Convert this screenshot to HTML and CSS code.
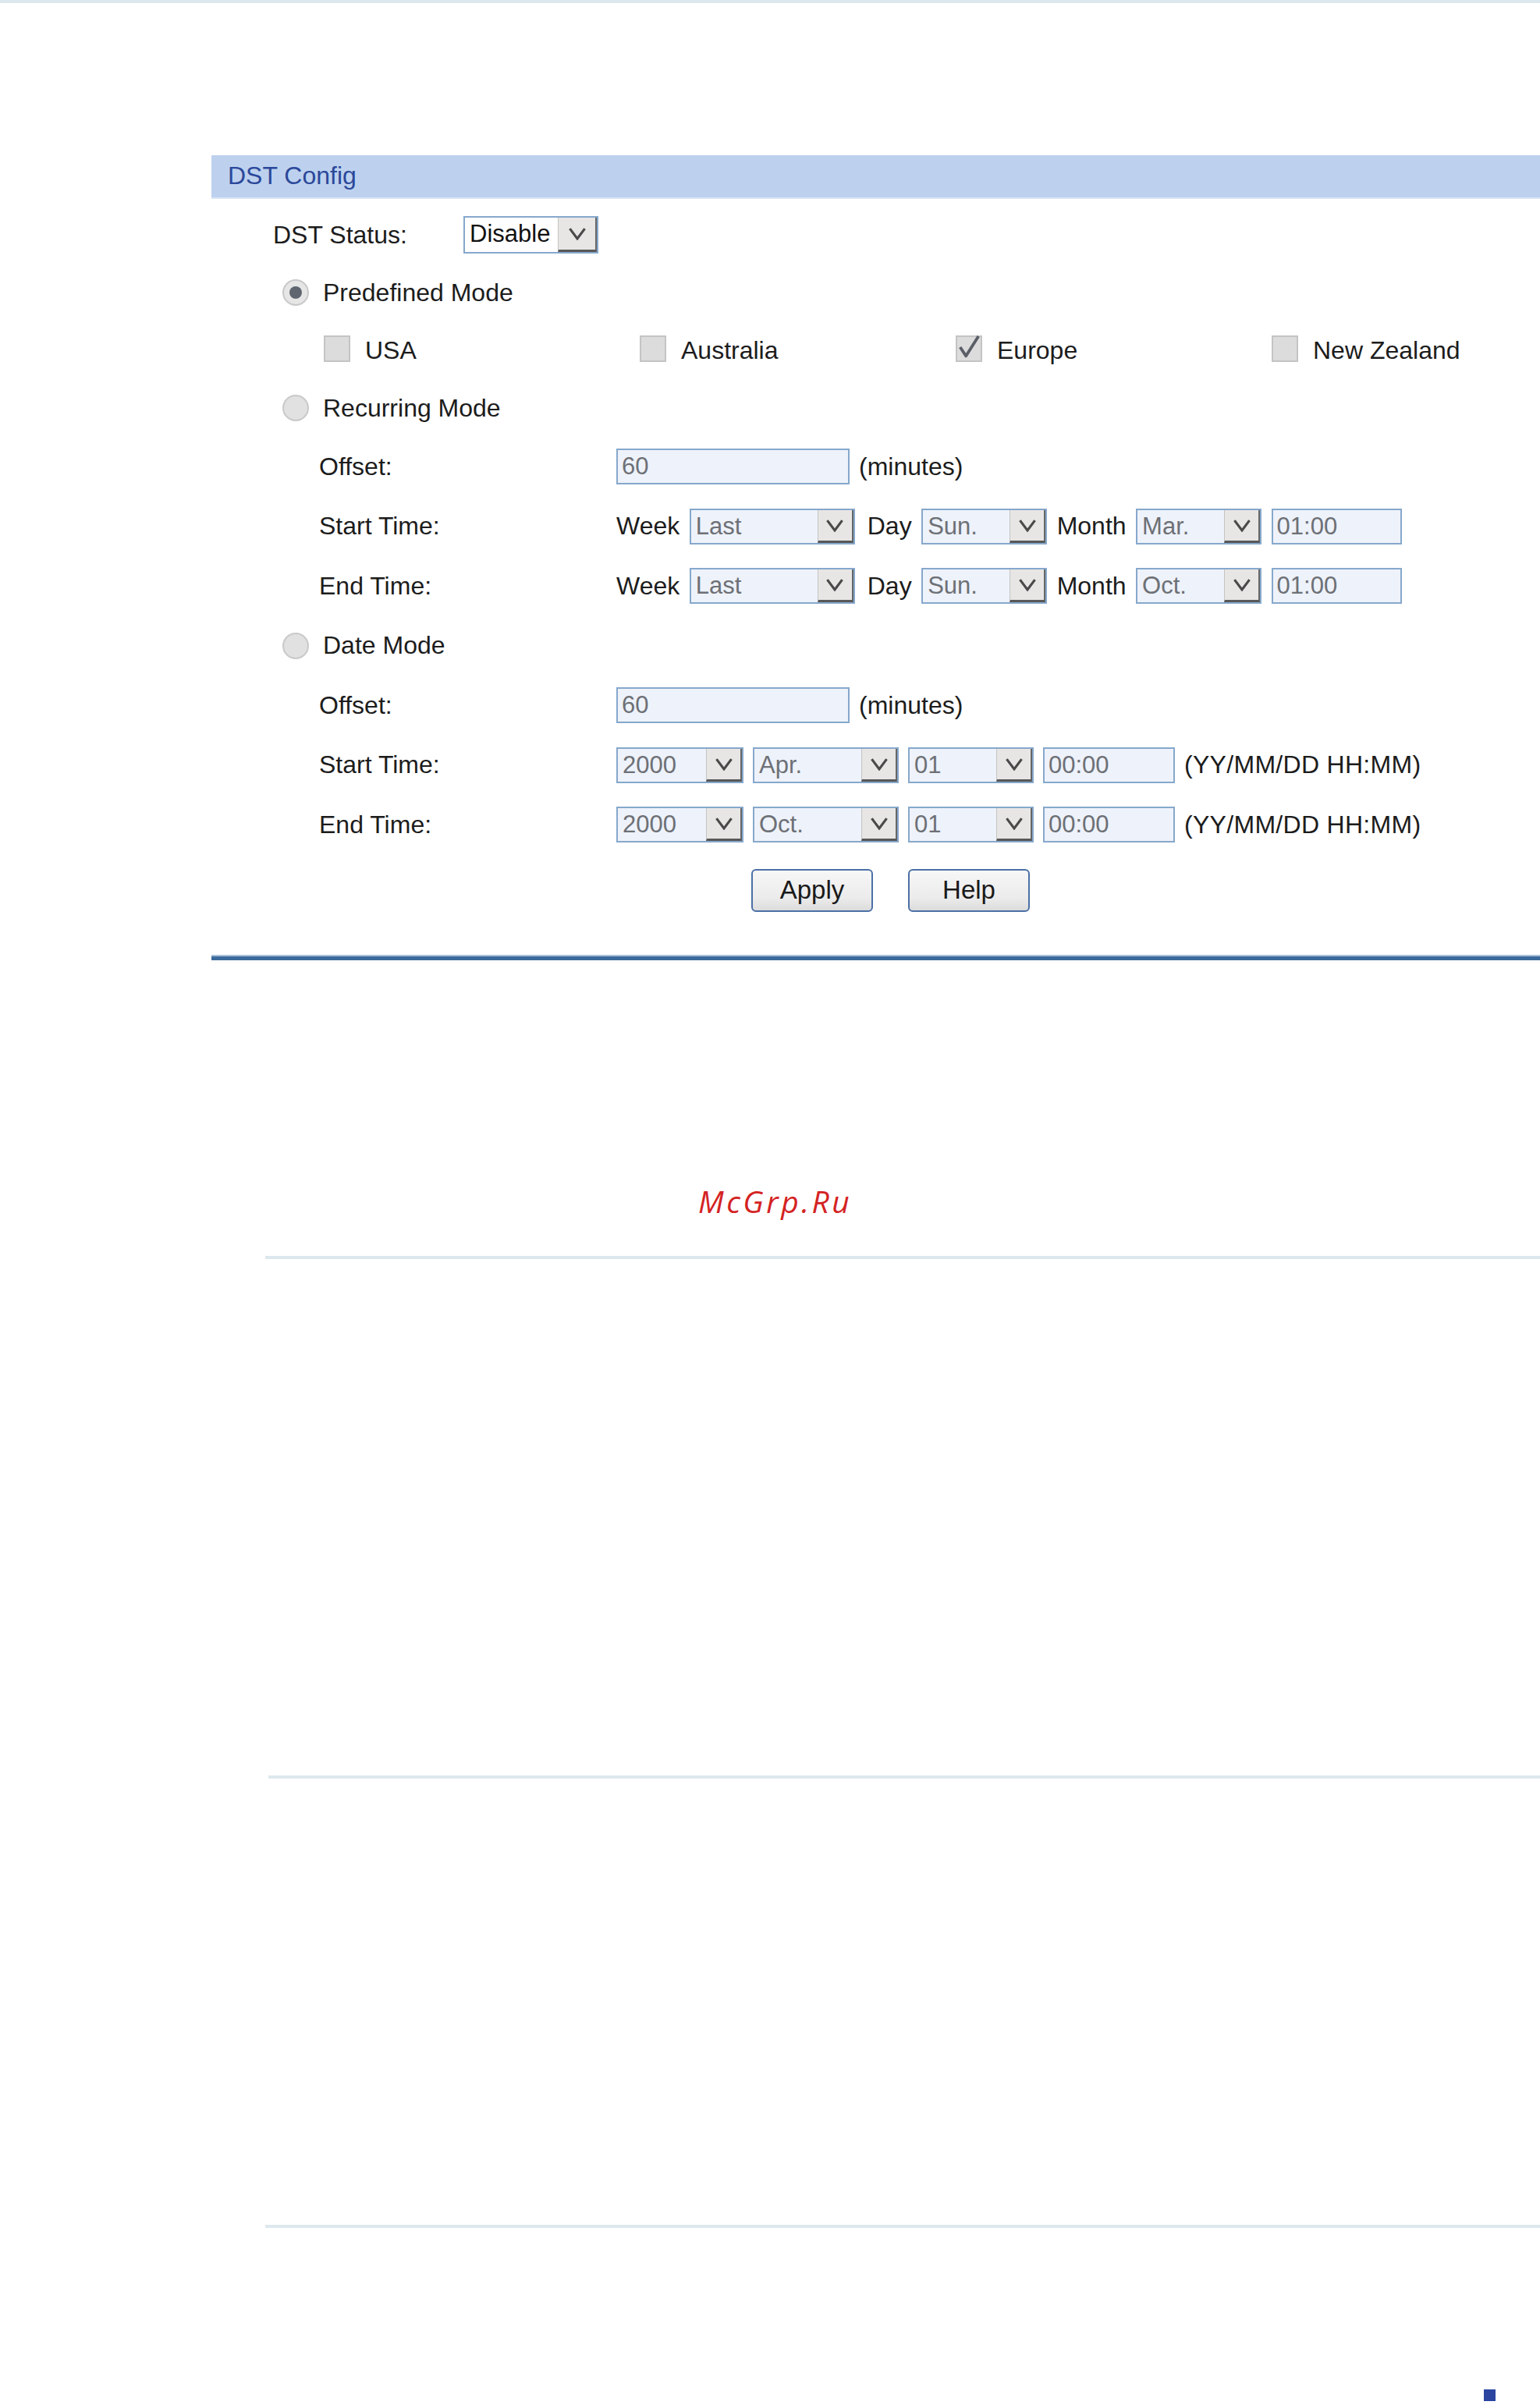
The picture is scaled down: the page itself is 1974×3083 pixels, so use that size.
FILE: index.html
```html
<!DOCTYPE html>
<html lang="en">
<head>
<meta charset="utf-8">
<title>DST Config</title>
<link rel="stylesheet" href="styles.css">
</head>
<body>
<div class="topline"></div>

<div class="panel">
  <div class="panel-head">DST Config</div>
  <div class="panel-body">
    <div class="row main">
      <span class="lbl">DST Status:</span>
      <div class="sel enabled w-status"><span class="val">Disable</span><span class="arrow"><svg viewBox="0 0 24 16" class="chev"><polyline points="3,2 12,14 21,2"/></svg></span></div>
    </div>

    <div class="row mode">
      <span class="radio checked"></span><span>Predefined Mode</span>
    </div>

    <div class="row checks">
      <div class="chk-item"><span class="chk"></span><span>USA</span></div>
      <div class="chk-item"><span class="chk"></span><span>Australia</span></div>
      <div class="chk-item"><span class="chk checked"><svg viewBox="0 0 34 34" class="tick"><polyline points="5,16 13,28 30,1"/></svg></span><span>Europe</span></div>
      <div class="chk-item"><span class="chk"></span><span>New Zealand</span></div>
    </div>

    <div class="row mode">
      <span class="radio"></span><span>Recurring Mode</span>
    </div>

    <div class="row sub">
      <span class="lbl">Offset:</span>
      <div class="ctrls">
        <div class="inp w-offset">60</div><span>(minutes)</span>
      </div>
    </div>

    <div class="row sub">
      <span class="lbl">Start Time:</span>
      <div class="ctrls rec">
        <span>Week</span>
        <div class="sel w-week"><span class="val">Last</span><span class="arrow"><svg viewBox="0 0 24 16" class="chev"><polyline points="3,2 12,14 21,2"/></svg></span></div>
        <span class="sp">Day</span>
        <div class="sel w-day"><span class="val">Sun.</span><span class="arrow"><svg viewBox="0 0 24 16" class="chev"><polyline points="3,2 12,14 21,2"/></svg></span></div>
        <span>Month</span>
        <div class="sel w-day"><span class="val">Mar.</span><span class="arrow"><svg viewBox="0 0 24 16" class="chev"><polyline points="3,2 12,14 21,2"/></svg></span></div>
        <div class="inp w-time">01:00</div>
      </div>
    </div>

    <div class="row sub">
      <span class="lbl">End Time:</span>
      <div class="ctrls rec">
        <span>Week</span>
        <div class="sel w-week"><span class="val">Last</span><span class="arrow"><svg viewBox="0 0 24 16" class="chev"><polyline points="3,2 12,14 21,2"/></svg></span></div>
        <span class="sp">Day</span>
        <div class="sel w-day"><span class="val">Sun.</span><span class="arrow"><svg viewBox="0 0 24 16" class="chev"><polyline points="3,2 12,14 21,2"/></svg></span></div>
        <span>Month</span>
        <div class="sel w-day"><span class="val">Oct.</span><span class="arrow"><svg viewBox="0 0 24 16" class="chev"><polyline points="3,2 12,14 21,2"/></svg></span></div>
        <div class="inp w-time">01:00</div>
      </div>
    </div>

    <div class="row mode">
      <span class="radio"></span><span>Date Mode</span>
    </div>

    <div class="row sub">
      <span class="lbl">Offset:</span>
      <div class="ctrls">
        <div class="inp w-offset">60</div><span>(minutes)</span>
      </div>
    </div>

    <div class="row sub">
      <span class="lbl">Start Time:</span>
      <div class="ctrls date">
        <div class="sel w-year"><span class="val">2000</span><span class="arrow"><svg viewBox="0 0 24 16" class="chev"><polyline points="3,2 12,14 21,2"/></svg></span></div>
        <div class="sel w-mon"><span class="val">Apr.</span><span class="arrow"><svg viewBox="0 0 24 16" class="chev"><polyline points="3,2 12,14 21,2"/></svg></span></div>
        <div class="sel w-dd"><span class="val">01</span><span class="arrow"><svg viewBox="0 0 24 16" class="chev"><polyline points="3,2 12,14 21,2"/></svg></span></div>
        <div class="inp w-hm">00:00</div>
        <span class="fmt">(YY/MM/DD HH:MM)</span>
      </div>
    </div>

    <div class="row sub">
      <span class="lbl">End Time:</span>
      <div class="ctrls date">
        <div class="sel w-year"><span class="val">2000</span><span class="arrow"><svg viewBox="0 0 24 16" class="chev"><polyline points="3,2 12,14 21,2"/></svg></span></div>
        <div class="sel w-mon"><span class="val">Oct.</span><span class="arrow"><svg viewBox="0 0 24 16" class="chev"><polyline points="3,2 12,14 21,2"/></svg></span></div>
        <div class="sel w-dd"><span class="val">01</span><span class="arrow"><svg viewBox="0 0 24 16" class="chev"><polyline points="3,2 12,14 21,2"/></svg></span></div>
        <div class="inp w-hm">00:00</div>
        <span class="fmt">(YY/MM/DD HH:MM)</span>
      </div>
    </div>

    <div class="actions">
      <button class="btn">Apply</button>
      <button class="btn">Help</button>
    </div>
  </div>
  <div class="rule"></div>
</div>

<div class="lower">
  <div class="watermark">McGrp.Ru</div>
  <div class="hline l1"></div>
  <div class="hline l2"></div>
  <div class="hline l3"></div>
  <div class="corner"></div>
</div>
</body>
</html>
```

FILE: styles.css
```css
html, body {
  margin: 0;
  padding: 0;
  background: #ffffff;
}

body {
  font-family: "Liberation Sans", Arial, sans-serif;
  font-size: 32px;
  color: #1c1c1c;
  overflow: hidden;
}

.topline {
  height: 4px;
  background: #dde8ee;
}

.panel {
  margin: 195px 0 0 271px;
}

.panel-head {
  height: 56px;
  box-sizing: border-box;
  background: #bdd1ee;
  border-bottom: 2px solid #dbe6f4;
  color: #2b489a;
  padding-left: 21px;
  font-size: 32px;
  line-height: 52px;
}

.panel-body {
  padding-top: 9px;
}

.row {
  display: flex;
  align-items: center;
  height: 74px;
  white-space: nowrap;
}

.row.main {
  padding-left: 79px;
}

.row.main .lbl {
  width: 244px;
}

.row.mode {
  padding-left: 91px;
  gap: 18px;
}

.row.checks {
  display: grid;
  grid-template-columns: repeat(4, 405px);
  align-items: center;
  padding-left: 144px;
}

.chk-item {
  display: flex;
  align-items: center;
  gap: 19px;
}

.row.sub {
  padding-left: 138px;
  height: 76.5px;
}

/* Date Mode radio row sits between the sub rows */
.row.sub + .row.mode {
  height: 76.5px;
}

.row.sub .lbl {
  width: 381px;
}

.ctrls {
  display: flex;
  align-items: center;
  gap: 12px;
}

.ctrls.rec {
  gap: 12.5px;
}

.ctrls.rec .sp {
  margin-left: 3.5px;
}

.ctrls.date {
  gap: 12px;
}

.fmt {
  letter-spacing: 0.3px;
}

/* radio */
.radio {
  width: 34px;
  height: 34px;
  box-sizing: border-box;
  border-radius: 50%;
  border: 2px solid #c9c9c9;
  background: #e1e1e1;
  position: relative;
  flex: none;
}

.radio.checked {
  background: #e6e6e6;
}

.radio.checked::after {
  content: "";
  position: absolute;
  left: 7px;
  top: 7px;
  width: 16px;
  height: 16px;
  border-radius: 50%;
  background: #5f6670;
}

/* checkbox */
.chk {
  width: 34px;
  height: 34px;
  box-sizing: border-box;
  border: 2px solid #c4c4c4;
  background: #dcdcdc;
  position: relative;
  flex: none;
  margin-top: -4px;
}

.tick {
  position: absolute;
  left: -1px;
  top: -3px;
  width: 32px;
  height: 34px;
  overflow: visible;
}

.tick polyline {
  fill: none;
  stroke: #5a5e66;
  stroke-width: 4;
  stroke-linejoin: round;
}

/* inputs and selects */
.inp,
.sel {
  height: 46px;
  box-sizing: border-box;
  border: 2px solid #86a8cc;
  background: #eef2fa;
  color: #6d7076;
  font-size: 31px;
  line-height: 42px;
  flex: none;
}

.inp {
  padding-left: 5px;
}

.sel {
  display: flex;
  align-items: stretch;
}

.sel .val {
  flex: 1;
  padding-left: 6px;
  overflow: hidden;
}

.sel.enabled {
  background: #ffffff;
  color: #111111;
}

.sel .arrow {
  width: 46px;
  box-sizing: border-box;
  background: #e8e6e4;
  border-left: 1px solid #c4c4c4;
  border-right: 2px solid #666666;
  border-bottom: 3px solid #585858;
  display: flex;
  align-items: center;
  justify-content: center;
}

.chev {
  width: 26px;
  height: 17px;
}

.chev polyline {
  fill: none;
  stroke: #4a4a4a;
  stroke-width: 3;
}

.w-status { width: 173px; height: 48px; }
.w-status .arrow { width: 50px; }
.w-offset { width: 299px; }
.w-week { width: 212px; }
.w-day { width: 161px; }
.w-time { width: 167px; }
.w-year { width: 163px; }
.w-mon { width: 187px; }
.w-dd { width: 161px; }
.w-hm { width: 169px; }

/* buttons */
.actions {
  display: flex;
  gap: 45px;
  padding-left: 692px;
  margin-top: 18px;
}

.btn {
  width: 156px;
  height: 55px;
  box-sizing: border-box;
  border: 2px solid #4b70a6;
  border-radius: 6px;
  background: linear-gradient(#f7f7f7, #ebebeb 70%, #dcdcdc);
  font-family: "Liberation Sans", Arial, sans-serif;
  font-size: 33px;
  color: #1a1a1a;
  padding: 0;
}

.rule {
  margin-top: 55px;
  height: 5px;
  border-top: 2px solid #a9c1db;
  background: #3c6a9c;
}

/* lower page */
.watermark {
  margin-top: 279px;
  padding-left: 895px;
  height: 60px;
  line-height: 60px;
  font-family: "Open Sans", "DejaVu Sans", sans-serif;
  font-style: italic;
  font-size: 39px;
  letter-spacing: 3.5px;
  color: #d42323;
}

.hline {
  height: 4px;
  background: #dde8ee;
}

.l1 { margin: 40px 0 0 340px; }
.l2 { margin: 662px 0 0 344px; }
.l3 { margin: 572px 0 0 340px; }

.corner {
  margin: 207px 0 0 1902px;
  width: 15px;
  height: 15px;
  background: #2a44a0;
}
```
